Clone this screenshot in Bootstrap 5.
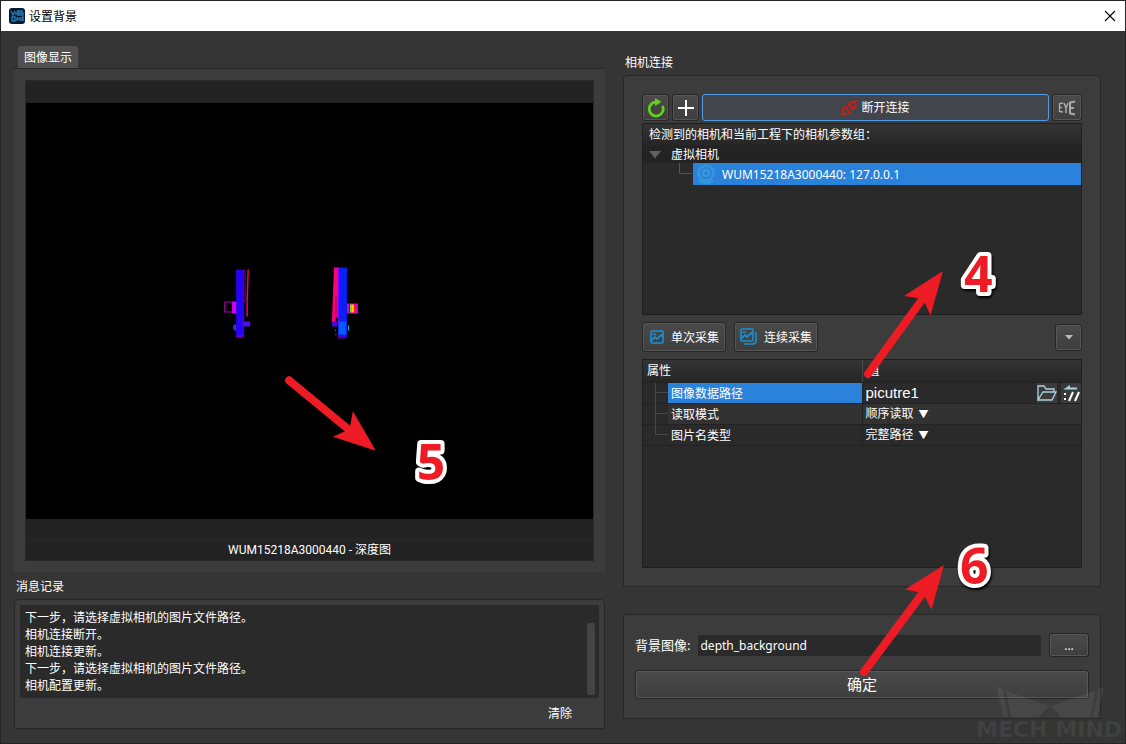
<!DOCTYPE html>
<html lang="zh-CN">
<head>
<meta charset="utf-8">
<meta name="viewport" content="width=device-width, initial-scale=1">
<title>设置背景</title>
<link rel="stylesheet" href="https://cdn.jsdelivr.net/npm/bootstrap@5.3.0/dist/css/bootstrap.min.css">
<style>
:root { --edge:#272727; --panel:#3c3c3c; --field:#2a2a2a; --sel:#2a82da; }
body { background:#353535; color:#fff; font-family:"Noto Sans","Noto Sans CJK SC",sans-serif; font-size:12px; line-height:17px; border:1px solid #252525; }
.roboto { font-family:Roboto,"Noto Sans CJK SC",sans-serif; }
.titlebar { background:#fff; color:#000; height:30px; padding:0 9px 0 8px; }
.titlebar button { width:12px; height:12px; }
.plain { background:none; border:0; padding:0; color:inherit; font:inherit; line-height:inherit; }
.workspace { display:grid; grid-template-columns:591fr 478fr; column-gap:18px; padding:15px 24px 14px 13px; }
.tab-btn { background:#505050; border-radius:3px 3px 0 0; height:22px; width:60px; margin-left:4px; padding:0; border:0; color:#fff; font:inherit; }
.tab-body { background:var(--panel); border-top:1px solid var(--edge); padding:11px; }
.viewer { background:#232323; border:1px solid #292929; padding-top:22px; }
.canvas-area { background:#000; min-height:200px; }
.canvas-area > svg { width:100%; height:100%; top:0; left:0; }
.below-canvas { height:22px; border-bottom:1px solid #292929; }
.caption-line { height:19px; line-height:19px; }
.section-label { height:27px; line-height:30px; padding-left:2px; }
.camera-label { height:29px; line-height:33px; }
.group-box { background:var(--panel); border:1px solid var(--edge); border-radius:4px 4px 0 0; }
.log-group { padding:5px 5px 0; }
.log-box { background:var(--field); height:93px; padding:4px 4px 4px 5px; }
.log-actions { height:30px; padding-right:27px; }
.log-thumb { width:8px; height:72px; background:#444; border-radius:2px; margin-top:14px; }
.tool { border:1px solid #262626; border-radius:3px; background:linear-gradient(#4a4a4a,#3e3e3e); box-shadow:inset 0 0 0 1px #575757; color:#fff; font:inherit; line-height:17px; padding:0; display:flex; align-items:center; justify-content:center; }
.tool-sm { width:27px; height:27px; }
.tool-eye { width:30px; height:27px; }
.tool-main { height:27px; background:#43454d; border-color:#4f9ce8; box-shadow:none; gap:4px; }
.tool-text { height:30px; gap:6px; width:84px; }
.cam-box { padding:18px; }
.cam-tools { gap:3px; margin-bottom:2px; }
.tree { background:var(--field); border:1px solid #1f1f1f; flex:192 1 192px; }
.head-grad { background:linear-gradient(#343434,#262626); }
.tree-head { height:21px; line-height:22px; padding-left:6px; }
.tree-root { height:18px; background:#232323; padding:1px 0 0 6px; gap:10px; line-height:17px; }
.tree-leaf { height:22px; margin-left:50px; background:var(--sel); padding-left:4px; gap:7px; }
.branch { left:-14px; top:0; width:13px; height:11px; border:1px solid #555; border-width:0 0 1px 1px; }
.capture-row { padding:7px 0; }
.props { background:var(--field); border:1px solid #1f1f1f; flex:209 1 209px; }
.props table { width:100%; table-layout:fixed; border-collapse:collapse; }
.props col.name-col { width:50%; }
.props th { font-weight:400; height:22px; padding:0 4px; border-bottom:1px solid #222; }
.props td { height:21px; padding:0 0 0 3px; border-bottom:1px solid #222; }
.props th + th, .props td + td { border-left:1px solid #222; }
.props th + th { border-left-color:#484848; padding-left:5px; }
.props td.prop-name { padding:0 0 0 25px; }
.prop-name > span { display:block; height:20px; line-height:21px; padding-left:3px; position:relative; }
.prop-name > span::before { content:""; position:absolute; left:-13px; top:0; width:13px; height:10px; border:1px solid #484848; border-width:0 0 1px 1px; }
.prop-name.mid > span::after { content:""; position:absolute; left:-13px; top:10px; height:11px; border-left:1px solid #484848; }
.prop-name > .picked { background:var(--sel); }
.row-alt > td + td, .row-alt > .prop-name > span { background:#323232; }
.path-input { font-family:"Liberation Sans",sans-serif; font-size:15px; min-width:0; }
.mini { width:20px; height:20px; background:#3b3b3b; }
.pick { appearance:none; width:49px; }
.pick option { color:#000; }
.arrow-mark { font-size:10px; padding-left:4px; }
.save-box { padding:18px 11px 19px; margin:27px 0 10px; }
.save-label { font-size:13px; }
.name-input { background:var(--field); height:21px; padding:0 2px; min-width:0; }
.more-btn { width:40px; height:24px; }
.ok-btn { height:29px; width:100%; margin-top:13px; font-size:15px; }
.note { pointer-events:none; z-index:3; }
.note-digit { font:700 50px "Open Sans",sans-serif; fill:#ed1c24; stroke:#fff; stroke-width:8px; stroke-linejoin:round; paint-order:stroke; filter:drop-shadow(1px 2px 1px #000); }
.note-line { stroke:#ed1c24; stroke-width:8px; stroke-linecap:round; }
.note-four { right:91px; top:179px; }
.note-six { right:91px; bottom:49px; }
.watermark { right:0; bottom:0; pointer-events:none; z-index:2; }
</style>
</head>
<body class="d-flex flex-column min-vh-100 position-relative">
<header class="titlebar d-flex align-items-center">
  <svg width="16" height="16" viewBox="0 0 16 16" aria-hidden="true"><rect width="16" height="16" rx="3" fill="#061a30"/><path d="M2 3l2 4 2-4M7 4v3M11 3H8.500v2h2v2H8M14 3h-2v2h2v2h-2.500M3 9h3v4H3zM8 9v4M8 11h3M11 9v4M13 13V9l1 4V8" fill="none" stroke="#2a7cb8" stroke-width="1.300"/></svg>
  <span class="ms-1">设置背景</span>
  <button class="plain ms-auto d-flex" aria-label="关闭"><svg width="12" height="12" viewBox="0 0 12 12"><path d="M1 1l10 10M11 1L1 11" stroke="#000" stroke-width="1.100"/></svg></button>
</header>

<main class="workspace flex-grow-1">
  <section class="d-flex flex-column">
    <div><button class="tab-btn d-block">图像显示</button></div>
    <div class="tab-body flex-grow-1 d-flex flex-column">
      <div class="viewer flex-grow-1 d-flex flex-column">
        <div class="canvas-area flex-grow-1 position-relative">
          <svg class="position-absolute" viewBox="0 0 567 417" role="img" aria-label="深度图">
            <defs>
              <pattern id="mesh" width="3" height="4" patternUnits="userSpaceOnUse"><rect width="3" height="4" fill="#2200ff"/><path d="M0 0h1v1H0z" fill="#5a00c8"/></pattern>
              <pattern id="mesh2" width="3" height="4" patternUnits="userSpaceOnUse"><rect width="3" height="4" fill="#0a1cff"/><path d="M0 0h1v1H0z" fill="#0048c0"/></pattern>
            </defs>
            <rect x="210" y="167" width="8" height="67" fill="url(#mesh)"/>
            <rect x="210" y="233" width="7" height="2" fill="#7000c8"/>
            <path d="M222 167l-1 32v15" fill="none" stroke="#f0006c" stroke-width="1.500"/><path d="M219 167v32M218 199h4" stroke="#8a0048"/>
            <rect x="198.500" y="199.500" width="8" height="10" fill="none" stroke="#b000b0"/><rect x="206" y="199" width="4" height="12" fill="#d000ff"/>
            <rect x="217" y="219" width="7" height="5" fill="#5010e8"/><path d="M207.500 223v4" stroke="#087060"/><path d="M209 222v6" stroke="#3030ff" stroke-width="2"/>
            <path d="M308 165h5v50h-3l-1 5h-3z" fill="#ff007c"/><path d="M310 194v20" stroke="#600060"/>
            <rect x="312" y="165" width="9" height="70" fill="url(#mesh2)"/><path d="M312.500 165v58" stroke="#8000ff"/>
            <rect x="306" y="219" width="5" height="5" fill="#5200dc"/><rect x="313" y="219" width="7" height="13" fill="#005cff"/><rect x="312" y="233" width="8" height="3" fill="#4800bc"/>
            <rect x="321" y="201" width="11" height="10" fill="#d800cc"/><path d="M324 202h2v8h-2z" fill="#60f000"/><path d="M326 202h2v8h-2z" fill="#ffd000"/><path d="M328 202h2v8h-2z" fill="#ff2000"/><path d="M323.500 201v10" stroke="#7000a0"/>
            <path d="M322.500 223v5" stroke="#00c8d8"/><path d="M309.500 227v2M310 231v2" stroke="#803050"/>
            <path class="note-line" d="M263 278L320 325"/><path d="M350 348.500L327 309l-2.500 13.500-5.500 6.500-12 5.500z" fill="#ed1c24"/>
            <text class="note-digit" x="391" y="378">5</text>
          </svg>
        </div>
        <div class="below-canvas"></div>
        <div class="caption-line text-center roboto">WUM15218A3000440 - 深度图</div>
      </div>
    </div>
    <div class="section-label">消息记录</div>
    <div class="group-box log-group">
      <div class="log-box d-flex" role="log">
        <div class="flex-grow-1">
          <div>下一步，请选择虚拟相机的图片文件路径。</div>
          <div>相机连接断开。</div>
          <div>相机连接更新。</div>
          <div>下一步，请选择虚拟相机的图片文件路径。</div>
          <div>相机配置更新。</div>
        </div>
        <div class="log-thumb"></div>
      </div>
      <div class="log-actions d-flex justify-content-end align-items-center"><button class="plain">清除</button></div>
    </div>
  </section>

  <section class="d-flex flex-column position-relative">
    <div class="section-label camera-label">相机连接</div>
    <div class="group-box cam-box flex-grow-1 d-flex flex-column">
      <div class="cam-tools d-flex">
        <button class="tool tool-sm" aria-label="刷新"><svg width="20" height="20" viewBox="0 0 20 20"><path d="M16.500 8a7 7 0 1 1-6.500-4" fill="none" stroke="#5fd01c" stroke-width="2.800"/><path d="M9 0l6.500 4-6.500 4z" fill="#5fd01c"/></svg></button>
        <button class="tool tool-sm" aria-label="添加"><svg width="16" height="16" viewBox="0 0 16 16"><path d="M8 0v16M0 8h16" stroke="#fff" stroke-width="2"/></svg></button>
        <button class="tool tool-main flex-grow-1"><svg width="16" height="16" viewBox="0 0 16 16"><g fill="none" stroke="#e01808" stroke-width="1.600"><path d="M0 16l3-3M16 0l-2 2M3 7a4 4 0 0 0-1 5c1 2 4 3 7 0zM13 9a4 4 0 0 0 1-6c-2-2-5-1-6 1zM6 7l3-3M10 10l2-2"/></g></svg><span>断开连接</span></button>
        <button class="tool tool-eye" aria-label="EYE"><svg width="18" height="16" viewBox="0 0 18 16" fill="none" stroke="#aaa"><path d="M5 3L1.500 3.500v8L5 12M1.500 7.500H4" stroke-width="1.300"/><path d="M6 3l2 5 2-5M8 8v5" stroke-width="1.500"/><path d="M17 1.500l-5 1v11l5 1M12 8h4" stroke-width="2"/></svg></button>
      </div>
      <div class="tree" role="tree">
        <div class="tree-head head-grad">检测到的相机和当前工程下的相机参数组：</div>
        <div class="tree-root d-flex align-items-center" role="treeitem"><svg width="12" height="8" viewBox="0 0 12 8"><path d="M0 0h12L6 7.500z" fill="#606060"/></svg><span>虚拟相机</span></div>
        <div class="tree-leaf d-flex align-items-center position-relative" role="treeitem"><span class="branch position-absolute"></span>
          <svg width="18" height="20" viewBox="0 0 18 20" fill="none" stroke="#3597dc" stroke-width="2.500"><circle cx="9" cy="9" r="7.500"/><circle cx="9" cy="9" r="3"/><path d="M2 17q7 4 14 0"/></svg><span>WUM15218A3000440: 127.0.0.1</span></div>
      </div>
      <div class="capture-row d-flex align-items-center">
        <button class="tool tool-text"><svg width="16" height="16" viewBox="0 0 16 16" fill="none" stroke="#1692d8" stroke-width="1.600"><rect x="2" y="2" width="12" height="12" rx="1"/><path d="M2 12l4-4 2 2 4-4 2 2M4 6q1-2 3 0"/></svg><span>单次采集</span></button>
        <button class="tool tool-text ms-2"><svg width="18" height="18" viewBox="0 0 18 18" fill="none" stroke="#1692d8" stroke-width="1.600"><rect x="1" y="1" width="12" height="12" rx="1"/><path d="M1 11l4-4 2 2 4-4 2 2M3 5q1-2 3 0M4 16h9q3 0 3-3V4"/></svg><span>连续采集</span></button>
        <button class="tool tool-sm ms-auto" aria-label="更多选项"><svg width="8" height="5" viewBox="0 0 8 5"><path d="M0 0h8L4 4.500z" fill="#bbb"/></svg></button>
      </div>
      <div class="props">
        <table>
          <colgroup><col class="name-col"><col></colgroup>
          <thead class="head-grad"><tr><th scope="col">属性</th><th scope="col">值</th></tr></thead>
          <tbody>
            <tr><td class="prop-name mid"><span class="picked"><label for="path">图像数据路径</label></span></td>
              <td><div class="d-flex align-items-center"><input id="path" class="plain path-input flex-grow-1" value="picutre1">
                <button class="plain mini d-flex" aria-label="打开文件夹"><svg width="20" height="20" viewBox="0 0 20 20" fill="none" stroke="#a8d4e0" stroke-width="1.300"><path d="M1 17V3h6l2 3h8v3M1 17h14l4-8H6z"/></svg></button>
                <button class="plain mini d-flex ms-1" aria-label="相对路径"><svg width="20" height="20" viewBox="0 0 20 20"><path d="M3 6l6-4v2.500h7v2H3z" fill="#a8d4e0"/><path d="M3 10h2v2H3zM3 15h2v2H3z" fill="#fff"/><path d="M8 18l4-9M14 18l4-9" stroke="#fff" stroke-width="2"/></svg></button></div></td></tr>
            <tr class="row-alt"><td class="prop-name mid"><span><label for="mode">读取模式</label></span></td>
              <td><select id="mode" class="plain pick"><option>顺序读取</option><option>随机读取</option></select><span class="arrow-mark">▼</span></td></tr>
            <tr><td class="prop-name"><span><label for="kind">图片名类型</label></span></td>
              <td><select id="kind" class="plain pick"><option>完整路径</option><option>文件名称</option></select><span class="arrow-mark">▼</span></td></tr>
          </tbody>
        </table>
      </div>
    </div>
    <div class="group-box save-box">
      <div class="d-flex align-items-center">
        <label for="bg" class="save-label me-2">背景图像:</label>
        <input id="bg" class="plain name-input roboto flex-grow-1" value="depth_background">
        <button class="tool more-btn ms-2">...</button>
      </div>
      <button class="tool ok-btn">确定</button>
    </div>
    <svg class="note note-four position-absolute" width="155" height="160" viewBox="855 225 155 160"><path class="note-line" d="M868 374L921 301"/><path d="M943 271l-39 25 13.700 2 7.300 5 5.500 12.500z" fill="#ed1c24"/><text class="note-digit" x="964" y="292">4</text></svg>
    <svg class="note note-six position-absolute" width="155" height="162" viewBox="855 518 155 162"><path class="note-line" d="M864 672L922 594"/><path d="M944 565l-39 24.500 13.500 2.500 6.500 5 6.500 12.500z" fill="#ed1c24"/><text class="note-digit" x="960" y="584">6</text></svg>
  </section>
</main>
<svg class="watermark position-absolute" width="150" height="60" viewBox="0 0 150 60" fill="#fff" fill-opacity=".06"><path transform="translate(0 3)" d="M22 1l6 2 5 28h-5zM31 5l44 15-12 11H36zM120 5L76 20l10 11h30zM129 1l-6 2-5 28h4z"/><text x="1" y="54" font-family="DejaVu Sans,sans-serif" font-weight="700" font-size="22">MECH MIND</text></svg>
<script src="https://cdn.jsdelivr.net/npm/bootstrap@5.3.0/dist/js/bootstrap.bundle.min.js"></script>
</body>
</html>
